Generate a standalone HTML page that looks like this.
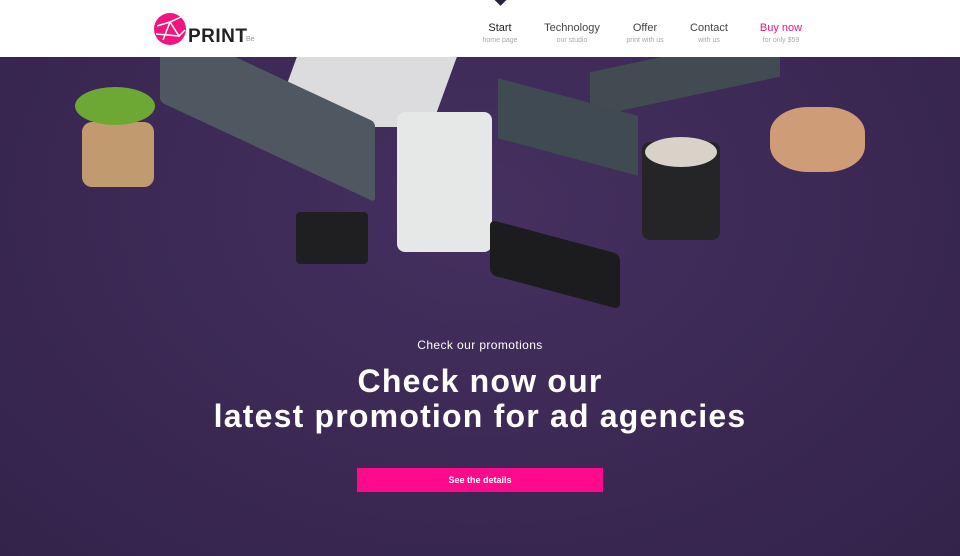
<!DOCTYPE html>
<html><head><meta charset="utf-8"><style>
*{margin:0;padding:0;box-sizing:border-box}
body{width:960px;height:556px;overflow:hidden;font-family:"Liberation Sans",sans-serif;background:#3a2852;position:relative}
.hero{position:absolute;left:0;top:57px;width:960px;height:499px;background:radial-gradient(ellipse at 50% 30%,#45305f 0%,#3c2955 50%,#33234a 100%);overflow:hidden}
header{position:absolute;left:0;top:0;width:960px;height:57px;background:#fff;z-index:5}
.logo{position:absolute;left:153px;top:12px}
.logo .t{position:absolute;left:35px;top:14px;font-weight:bold;font-size:19px;color:#222;letter-spacing:.5px}
.logo .be{position:absolute;left:93px;top:24px;font-size:7px;color:#999}
nav{position:absolute;top:22px;left:470px}
nav div{position:absolute;text-align:center;width:90px;margin-left:-45px}
nav b{display:block;font-weight:normal;font-size:11px;color:#444}
nav span{display:block;font-size:7px;color:#aaa;margin-top:3px}
.o{position:absolute}
h3{position:absolute;top:338px;width:960px;text-align:center;color:#fff;font-weight:normal;font-size:12px;letter-spacing:.4px}
h1{position:absolute;top:364px;width:960px;text-align:center;color:#fff;font-weight:bold;font-size:32px;line-height:35px;letter-spacing:1.2px}
.btn{position:absolute;left:357px;top:468px;width:246px;height:24px;background:#ff0a8a;color:#fff;font-size:9px;text-align:center;line-height:24px;font-weight:bold}
</style></head><body>
<div class="hero">
<div class="o" style="left:285px;top:-5px;width:160px;height:75px;background:#dcdcdf;transform:skewX(-20deg);border-radius:4px"></div>
<div class="o" style="left:160px;top:15px;width:215px;height:80px;background:#4f5860;transform:skewY(25deg);border-radius:4px"></div>
<div class="o" style="left:590px;top:-5px;width:190px;height:45px;background:#424a52;transform:skewY(-12deg)"></div>
<div class="o" style="left:82px;top:65px;width:72px;height:65px;background:#c29a70;border-radius:10px"></div>
<div class="o" style="left:75px;top:30px;width:80px;height:38px;background:#6ea834;border-radius:50%"></div>
<div class="o" style="left:397px;top:55px;width:95px;height:140px;background:#e6e7e7;border-radius:8px"></div>
<div class="o" style="left:498px;top:40px;width:140px;height:60px;background:#404a52;transform:skewY(15deg)"></div>
<div class="o" style="left:642px;top:85px;width:78px;height:98px;background:#252527;border-radius:8px"></div>
<div class="o" style="left:645px;top:80px;width:72px;height:30px;background:#d8d2c8;border-radius:50%"></div>
<div class="o" style="left:770px;top:50px;width:95px;height:65px;background:#cf9c78;border-radius:40%"></div>
<div class="o" style="left:296px;top:155px;width:72px;height:52px;background:#1f1f22;border-radius:4px"></div>
<div class="o" style="left:490px;top:180px;width:130px;height:55px;background:#1c1c1e;transform:skewY(15deg);border-radius:6px"></div>
</div>
<header>
<div class="logo"><svg width="34" height="34" viewBox="0 0 34 34"><circle cx="17" cy="17" r="16" fill="#f0167f"/><path d="M4 14L17 10L28 5M10 28L17 10M17 10L26 24L32 18M3 22L26 24" stroke="#fff" stroke-width="1.5" fill="none"/></svg><span class="t">PRINT</span><span class="be">Be</span></div>
<nav>
<div style="left:30px"><b style="color:#222">Start</b><span>home page</span></div>
<div style="left:102px"><b>Technology</b><span>our studio</span></div>
<div style="left:175px"><b>Offer</b><span>print with us</span></div>
<div style="left:239px"><b>Contact</b><span>with us</span></div>
<div style="left:311px"><b style="color:#e8147f">Buy now</b><span>for only $59</span></div>
</nav>
<div style="position:absolute;left:496px;top:-5px;width:9px;height:9px;background:#2a2040;transform:rotate(45deg)"></div>
</header>
<h3>Check our promotions</h3>
<h1>Check now our<br>latest promotion for ad agencies</h1>
<div class="btn">See the details</div>
</body></html>
